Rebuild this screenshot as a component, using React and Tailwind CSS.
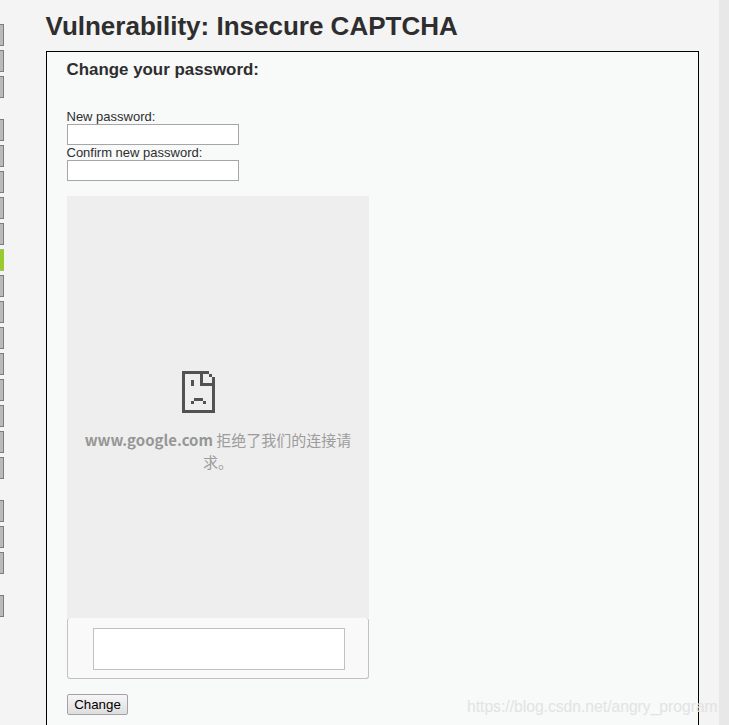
import React from "react";

const sans = "font-['Liberation_Sans',Arial,sans-serif]";

const menuGroups = [
  [0, 0, 0],
  [0, 0, 0, 0, 0, 1, 0, 0, 0, 0, 0, 0, 0, 0],
  [0, 0, 0],
  [0],
];

const SadPage = () => (
  <svg width="33" height="42" viewBox="0 0 11 14" fill="#525252" shapeRendering="crispEdges" className="mr-[40px]">
    <path d="M0 0h9v1h-9zM0 0h1v14h-1zM0 13h11v1h-11zM10 2h1v12h-1zM6 0h1v5h-1zM6 4h5v1h-5zM9 1h1v1h-1z" />
    <path d="M3 3h1v2h-1zM4 9h3v1h-3zM3 10h1v1h-1zM7 10h1v1h-1z" />
  </svg>
);

const Sidebar = () => (
  <div className="flex flex-col w-[4px] shrink-0 pt-[24px]">
    {menuGroups.map((group, i) => (
      <div key={i} className="flex flex-col gap-[4px] mb-[21px]">
        {group.map((on, j) => (
          <div
            key={j}
            className={
              on
                ? "h-[22px] bg-[#9acb2e] border-y border-[#a9b98a]"
                : "h-[22px] bg-[#bababa] border border-l-0 border-[#7d7d7d]"
            }
          ></div>
        ))}
      </div>
    ))}
  </div>
);

const Captcha = () => (
  <div className="w-[302px] mt-[15px]">
    <div className="h-[422px] bg-[#eeeeee] flex flex-col items-center pt-[175px] px-[16px]">
      <SadPage />
      <p className="mt-[16px] text-center text-[15px] leading-[22px] text-[#9c9c9c] font-['Noto_Sans_CJK_SC',sans-serif]">
        <b className="font-bold text-[#969696]">www.google.com</b> 拒绝了我们的连接请求。
      </p>
    </div>
    <div className="h-[61px] bg-[#f9f9f9] border border-t-0 border-[#c1c1c1] rounded-[3px] flex justify-center pt-[10px] pl-[1px]">
      <textarea className="w-[252px] h-[42px] bg-white border border-[#c1c1c1] resize-none"></textarea>
    </div>
  </div>
);

export default function App() {
  return (
    <div className={`relative h-[725px] w-[729px] overflow-hidden bg-[#f4f4f4] flex ${sans} text-[#2e2e2e]`}>
      <Sidebar />
      <div className="w-[695px] pl-[42px] shrink-0">
        <h1 className="text-[26px] leading-[30px] font-bold mt-[11px] mb-[10px] -ml-[0.5px]">Vulnerability: Insecure CAPTCHA</h1>
        <div className="w-[653px] h-[700px] bg-[#f8f9f9] border border-black pl-[20px]">
          <h3 className="text-[16.9px] leading-[20px] font-bold mt-[8px] mb-[29px] -ml-[0.5px]">Change your password:</h3>
          <form className="text-[13px] leading-[15px]">
            <label className="block -ml-[0.5px]">New password:</label>
            <input type="password" className="block w-[172px] h-[21px] bg-white border border-[#a6a6a6]" />
            <label className="block -ml-[0.5px]">Confirm new password:</label>
            <input type="password" className="block w-[172px] h-[21px] bg-white border border-[#a6a6a6]" />
            <Captcha />
            <button
              type="button"
              className="block mt-[15px] w-[61px] h-[21px] text-[13.33px] leading-[15px] text-black border border-[#a3a3a3] rounded-[2px] bg-gradient-to-b from-[#f6f6f6] to-[#dedede]"
            >
              Change
            </button>
          </form>
        </div>
      </div>
      <div className="ml-auto w-[10px] bg-[#e8e8e8]"></div>
      <span className="absolute left-[467px] top-[697px] text-[15.66px] leading-[20px] text-[#e1e3e3] whitespace-nowrap">
        https://blog.csdn.net/angry_program
      </span>
    </div>
  );
}
